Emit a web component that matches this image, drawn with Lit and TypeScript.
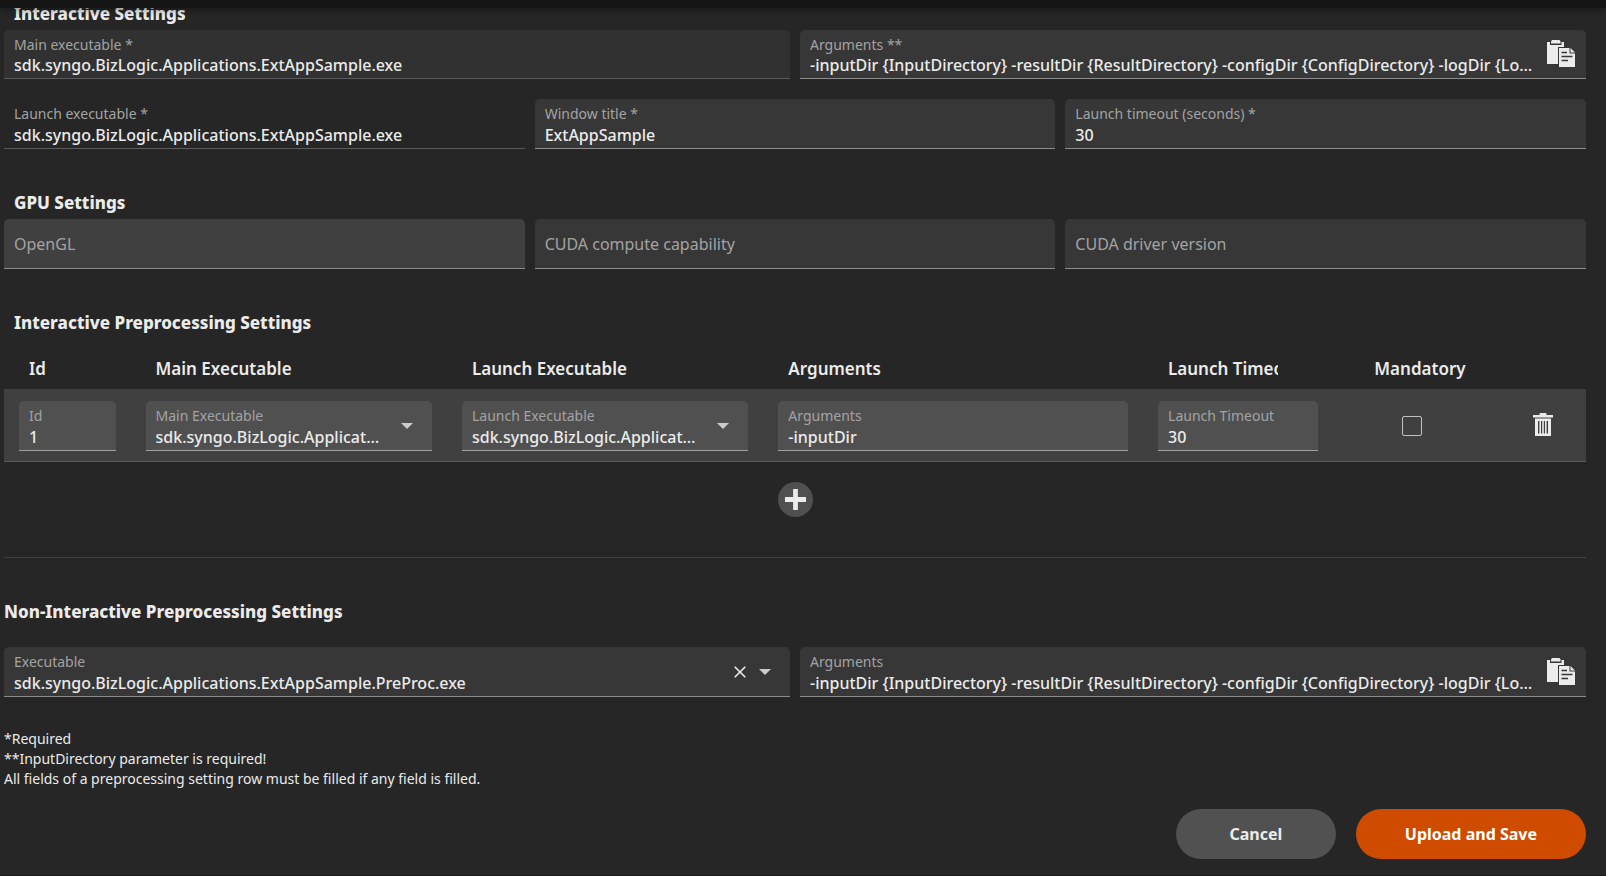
import { LitElement, html, css, nothing } from "lit";
import { customElement } from "lit/decorators.js";
import { classMap } from "lit/directives/class-map.js";

interface FieldOptions {
  id: string;
  label: string;
  value: string;
  kind?: "text" | "select";
  readonly?: boolean;
  look?: "locked" | "bare" | "raised";
  compact?: boolean;
  clearable?: boolean;
  paste?: boolean;
}

const RUN_ARGUMENTS =
  "-inputDir {InputDirectory} -resultDir {ResultDirectory} -configDir {ConfigDirectory} -logDir {LogDirectory}";

const caretIcon = html`<svg class="caret" viewBox="0 0 12 6" aria-hidden="true"><path d="M0 0h12L6 6z" /></svg>`;

const closeIcon = html`<svg class="close" viewBox="0 0 12 12" aria-hidden="true">
  <path d="M.7.7l10.6 10.6M11.3.7L.7 11.3" />
</svg>`;

const pasteIcon = html`<svg class="paste" viewBox="0 0 28 28" aria-hidden="true">
  <path d="M0 2h3v3h11.500V2H17v5h-6v17H0z" />
  <path d="M4 1.500L5 0h7.500l1 1.500V3.500H4z" />
  <path d="M12 8h10.500v5.500H28V27H12z" />
  <path d="M23.500 8l4.500 4.500h-4.500z" />
  <path class="rule" d="M14.500 12.500h5.500M14.500 16.500h11M14.500 20.500h6.500" />
</svg>`;

const trashIcon = html`<svg class="trash" viewBox="0 0 20 23" aria-hidden="true">
  <path d="M0 2h6.500V1a1 1 0 0 1 1-1h5a1 1 0 0 1 1 1v1H20v2.500H0z" />
  <path fill-rule="evenodd" d="M2 5.500h16V23H2zM5 8v12.500h1.400V8zM8 8v12.500h1.200V8zM10.800 8v12.500H12V8zM13.600 8v12.500H15V8z" />
</svg>`;

const plusIcon = html`<svg class="plus" viewBox="0 0 22 22" aria-hidden="true">
  <path d="M8.500 0h5v8.500H22v5h-8.500V22h-5v-8.500H0v-5h8.500z" />
</svg>`;

@customElement("app-root")
export class AppRoot extends LitElement {
  static styles = css`
    :host {
      display: block;
      min-height: 100vh;
      box-sizing: border-box;
      border-bottom: 1px solid #1a1a1a;
      background: #262626;
      color: #ebebeb;
      font-family: "Noto Sans", "Open Sans", sans-serif;
      font-size: 16px;
      line-height: 20px;
    }
    * {
      box-sizing: border-box;
    }
    .topbar {
      position: absolute;
      top: 0;
      left: 0;
      right: 0;
      height: 8px;
      background: #141414;
      box-shadow: 0 0 8px rgba(0, 0, 0, 0.6);
    }
    form {
      padding: 2px 20px 16px 4px;
    }
    h2 {
      margin: 0 0 4px;
      padding-left: 10px;
      font-size: 17px;
      font-weight: 800;
      line-height: 24px;
    }
    section + section {
      margin-top: 42px;
    }
    .row {
      display: grid;
      gap: 10px;
    }
    .row + .row {
      margin-top: 20px;
    }
    .halves {
      grid-template-columns: repeat(2, minmax(0, 1fr));
    }
    .thirds {
      grid-template-columns: repeat(3, minmax(0, 1fr));
    }
    .field {
      display: flex;
      align-items: center;
      min-width: 0;
      border-bottom: 1px solid #8c8c8c;
      border-radius: 5px 5px 0 0;
      background: #373737;
    }
    .text {
      flex: 1;
      min-width: 0;
      display: grid;
      gap: 1px;
      padding: 5px 0 3px 10px;
    }
    .compact .text {
      gap: 0;
    }
    .locked {
      background: #313131;
      border-bottom-color: #5a5a5a;
    }
    .bare {
      background: none;
      border-bottom-color: #5a5a5a;
    }
    .raised {
      background: #505050;
      border-bottom-color: #a0a0a0;
    }
    label {
      color: #a3a3a3;
      font-size: 14px;
      overflow: hidden;
      white-space: nowrap;
    }
    input,
    select,
    button {
      font: inherit;
      color: inherit;
      margin: 0;
      padding: 0;
      border: 0;
      background: none;
      outline: none;
    }
    .text input,
    .text select {
      display: block;
      width: 100%;
      min-width: 0;
      height: 20px;
      font-weight: 500;
      appearance: none;
      overflow: hidden;
      white-space: nowrap;
      text-overflow: ellipsis;
    }
    .text select {
      padding-right: 8px;
    }
    select option {
      background: #373737;
    }
    .blank {
      width: 100%;
      height: 50px;
      padding: 0 10px;
      border-bottom: 1px solid #8c8c8c;
      border-radius: 5px 5px 0 0;
      background: #373737;
    }
    .blank.active {
      background: #404040;
    }
    .blank::placeholder {
      color: #a3a3a3;
      opacity: 1;
    }
    button {
      cursor: pointer;
    }
    svg {
      display: block;
      fill: currentColor;
    }
    .caret {
      width: 12px;
      height: 6px;
      margin: 0 19px 0 13px;
      color: #cccccc;
      pointer-events: none;
    }
    .close {
      width: 12px;
      height: 12px;
      fill: none;
      stroke: currentColor;
      stroke-width: 1.6;
    }
    .paste {
      width: 28px;
      height: 28px;
      margin: 0 11px 0 14px;
    }
    .paste path {
      stroke: #373737;
      stroke-width: 1;
      paint-order: stroke;
    }
    .paste .rule {
      stroke-width: 1.5;
    }
    table {
      width: 100%;
      table-layout: fixed;
      border-collapse: separate;
      border-spacing: 0;
    }
    .c-id {
      width: 8%;
    }
    .c-exe {
      width: 20%;
    }
    .c-args {
      width: 24%;
    }
    .c-time {
      width: 12%;
    }
    .c-mand {
      width: 10%;
    }
    .c-del {
      width: 6%;
    }
    th {
      height: 50px;
      padding: 0 55px 8px 25px;
      font-size: 17px;
      font-weight: 600;
      line-height: 24px;
      text-align: left;
      vertical-align: bottom;
      white-space: nowrap;
    }
    th div {
      overflow: hidden;
    }
    th.center {
      padding: 0 0 8px 16px;
      text-align: center;
    }
    td {
      padding: 12px 15px 10px;
      background: #404040;
      border-bottom: 1px solid #5a5a5a;
    }
    td.action {
      padding: 10px 33px 12px 0;
    }
    .check {
      display: block;
      width: 20px;
      height: 20px;
      margin: 0 auto;
      appearance: none;
      border: 1px solid #c0c0c0;
      border-radius: 2px;
    }
    .delete {
      display: block;
      margin-left: auto;
    }
    .trash {
      width: 20px;
      height: 23px;
    }
    .add {
      display: grid;
      place-items: center;
      width: 35px;
      height: 35px;
      margin: 20px auto 40px;
      border-radius: 50%;
      background: #505050;
    }
    .plus {
      width: 21px;
      height: 21px;
    }
    hr {
      margin: 0;
      border: 0;
      border-top: 1px solid #404040;
    }
    .batch h2 {
      margin-bottom: 23px;
      padding-left: 0;
    }
    .notes {
      margin: 32px 0 20px;
      font-size: 14px;
    }
    .notes p {
      margin: 0;
    }
    .actions {
      display: flex;
      justify-content: flex-end;
      gap: 20px;
    }
    .actions button {
      min-width: 160px;
      height: 50px;
      padding: 0 49px;
      border-radius: 25px;
      background: #515151;
      font-weight: 700;
    }
    .actions .primary {
      background: #cf4b00;
      color: #ffffff;
    }
  `;

  private field(o: FieldOptions) {
    const classes = {
      field: true,
      compact: !!o.compact,
      locked: o.look === "locked",
      bare: o.look === "bare",
      raised: o.look === "raised"
    };
    return html`<div class=${classMap(classes)}>
      <div class="text">
        <label for=${o.id}>${o.label}</label>
        ${o.kind === "select"
          ? html`<select id=${o.id}><option selected>${o.value}</option></select>`
          : html`<input id=${o.id} type="text" .value=${o.value} ?readonly=${o.readonly} />`}
      </div>
      ${o.clearable ? html`<button type="button" aria-label="Clear">${closeIcon}</button>` : nothing}
      ${o.kind === "select" ? caretIcon : nothing}
      ${o.paste ? html`<button type="button" aria-label="Paste arguments">${pasteIcon}</button>` : nothing}
    </div>`;
  }

  render() {
    const exe = "sdk.syngo.BizLogic.Applications.ExtAppSample.exe";
    return html`
      <form>
        <section>
          <h2>Interactive Settings</h2>
          <div class="row halves">
            ${this.field({ id: "main", label: "Main executable *", value: exe, readonly: true, look: "locked", compact: true })}
            ${this.field({ id: "args", label: "Arguments **", value: RUN_ARGUMENTS, compact: true, paste: true })}
          </div>
          <div class="row thirds">
            ${this.field({ id: "launch", label: "Launch executable *", value: exe, readonly: true, look: "bare" })}
            ${this.field({ id: "title", label: "Window title *", value: "ExtAppSample" })}
            ${this.field({ id: "timeout", label: "Launch timeout (seconds) *", value: "30" })}
          </div>
        </section>

        <section>
          <h2>GPU Settings</h2>
          <div class="row thirds">
            <input class="blank active" type="text" placeholder="OpenGL" aria-label="OpenGL" />
            <input class="blank" type="text" placeholder="CUDA compute capability" aria-label="CUDA compute capability" />
            <input class="blank" type="text" placeholder="CUDA driver version" aria-label="CUDA driver version" />
          </div>
        </section>

        <section>
          <h2>Interactive Preprocessing Settings</h2>
          <table>
            <colgroup>
              <col class="c-id" />
              <col class="c-exe" />
              <col class="c-exe" />
              <col class="c-args" />
              <col class="c-time" />
              <col class="c-mand" />
              <col class="c-del" />
            </colgroup>
            <thead>
              <tr>
                <th scope="col"><div>Id</div></th>
                <th scope="col"><div>Main Executable</div></th>
                <th scope="col"><div>Launch Executable</div></th>
                <th scope="col"><div>Arguments</div></th>
                <th scope="col"><div>Launch Timeout</div></th>
                <th scope="col" class="center">Mandatory</th>
                <th></th>
              </tr>
            </thead>
            <tbody>
              <tr>
                <td>${this.field({ id: "row-id", label: "Id", value: "1", look: "raised" })}</td>
                <td>${this.field({ id: "row-main", label: "Main Executable", value: exe, kind: "select", look: "raised" })}</td>
                <td>${this.field({ id: "row-launch", label: "Launch Executable", value: exe, kind: "select", look: "raised" })}</td>
                <td>${this.field({ id: "row-args", label: "Arguments", value: "-inputDir", look: "raised" })}</td>
                <td>${this.field({ id: "row-timeout", label: "Launch Timeout", value: "30", look: "raised" })}</td>
                <td><input class="check" type="checkbox" aria-label="Mandatory" /></td>
                <td class="action"><button class="delete" type="button" aria-label="Delete row">${trashIcon}</button></td>
              </tr>
            </tbody>
          </table>
          <button class="add" type="button" aria-label="Add row">${plusIcon}</button>
          <hr />
        </section>

        <section class="batch">
          <h2>Non-Interactive Preprocessing Settings</h2>
          <div class="row halves">
            ${this.field({ id: "batch-exe", label: "Executable", value: "sdk.syngo.BizLogic.Applications.ExtAppSample.PreProc.exe", kind: "select", clearable: true })}
            ${this.field({ id: "batch-args", label: "Arguments", value: RUN_ARGUMENTS, paste: true })}
          </div>
        </section>

        <div class="notes">
          <p>*Required</p>
          <p>**InputDirectory parameter is required!</p>
          <p>All fields of a preprocessing setting row must be filled if any field is filled.</p>
        </div>

        <div class="actions">
          <button type="button">Cancel</button>
          <button type="submit" class="primary">Upload and Save</button>
        </div>
      </form>
      <div class="topbar"></div>
    `;
  }
}
